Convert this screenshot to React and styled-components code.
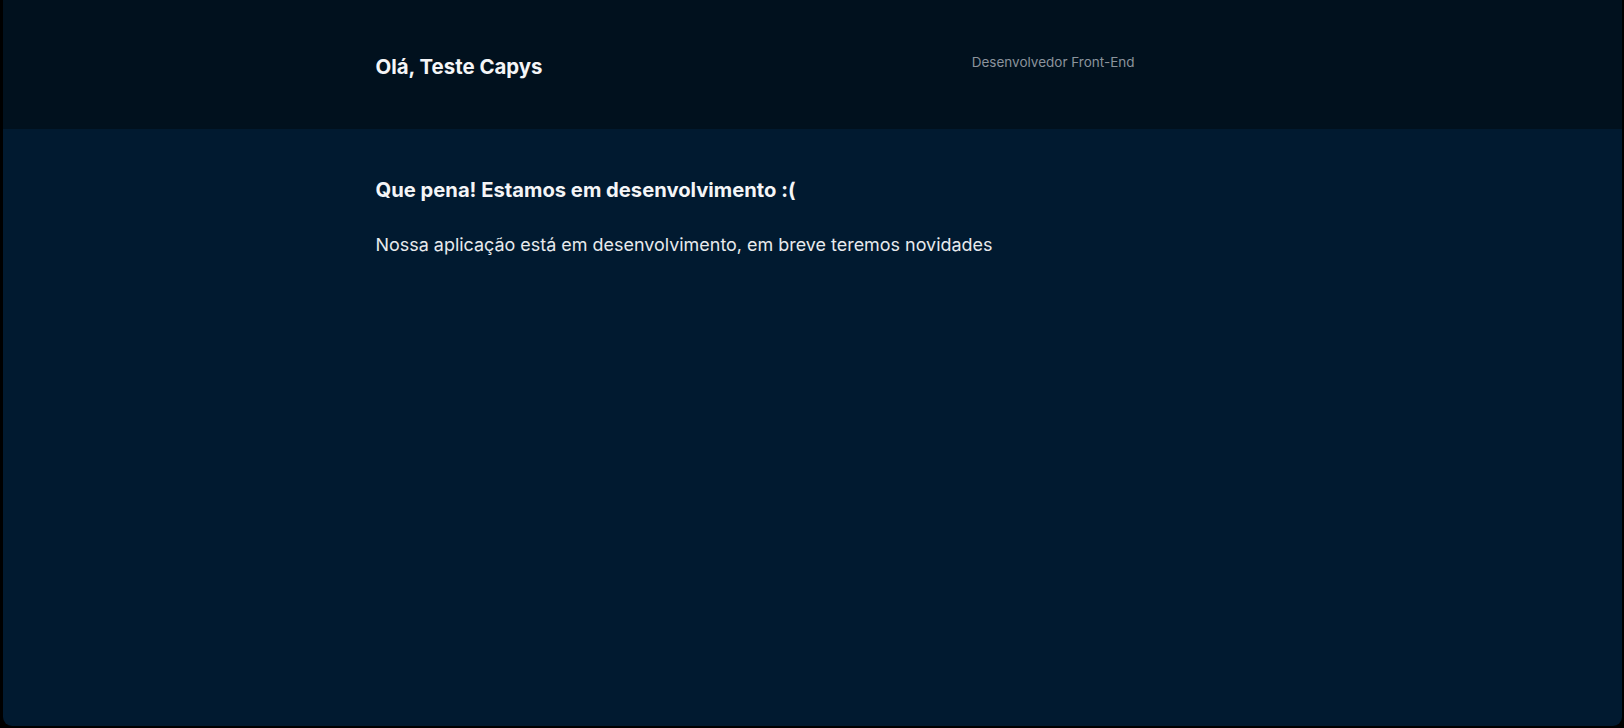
import React from "react";
import styled, { createGlobalStyle } from "styled-components";

const Global = createGlobalStyle`
  html, body { margin: 0; padding: 0; background: #000; }
  body { font-family: Inter, "Noto Sans", sans-serif; -webkit-font-smoothing: antialiased; }
  #root { height: 728px; }
`;

const Frame = styled.div`
  height: 726px;
  margin: 0 2px 2px 3px;
  border-radius: 0 0 9px 9px;
  overflow: hidden;
  display: flex;
  flex-direction: column;
  background: #011a30;
`;

const Header = styled.header`
  height: 129px;
  flex-shrink: 0;
  background: #01111e;
  box-sizing: border-box;
  padding-top: 53px;
`;

const Container = styled.div`
  width: 874px;
  margin: 0 auto;
`;

const HeaderRow = styled.div`
  width: 759px;
  display: flex;
  align-items: flex-start;
  justify-content: space-between;
`;

const Greeting = styled.h1`
  margin: 0;
  padding-top: 1px;
  font-size: 20.4px;
  font-weight: 700;
  line-height: normal;
  color: #f4f5f7;
`;

const Role = styled.span`
  padding-top: 1px;
  font-size: 13.5px;
  line-height: normal;
  color: #8b939c;
`;

const Main = styled.main`
  flex: 1;
  padding-top: 48px;
`;

const Title = styled.h2`
  margin: 0 0 32px;
  font-size: 20.2px;
  font-weight: 700;
  line-height: normal;
  color: #f4f5f7;
`;

const Text = styled.p`
  margin: 0;
  font-size: 17.95px;
  line-height: normal;
  color: #e8eaed;
`;

export default function App() {
  return (
    <>
      <Global />
      <Frame>
        <Header>
          <Container>
            <HeaderRow>
              <Greeting>Olá, Teste Capys</Greeting>
              <Role>Desenvolvedor Front-End</Role>
            </HeaderRow>
          </Container>
        </Header>
        <Main>
          <Container>
            <Title>Que pena! Estamos em desenvolvimento :(</Title>
            <Text>Nossa aplicação está em desenvolvimento, em breve teremos novidades</Text>
          </Container>
        </Main>
      </Frame>
    </>
  );
}
